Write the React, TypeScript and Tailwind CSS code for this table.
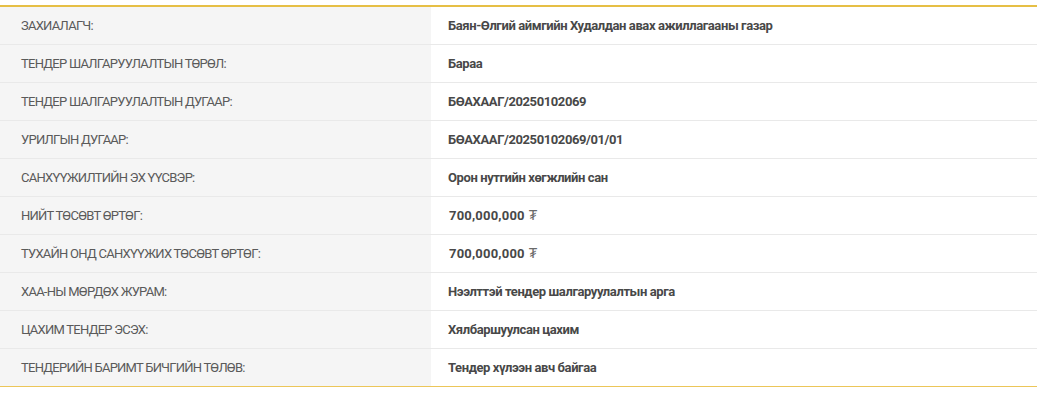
import React from 'react';

const rows: [string, string][] = [
  ['ЗАХИАЛАГЧ:', 'Баян-Өлгий аймгийн Худалдан авах ажиллагааны газар'],
  ['ТЕНДЕР ШАЛГАРУУЛАЛТЫН ТӨРӨЛ:', 'Бараа'],
  ['ТЕНДЕР ШАЛГАРУУЛАЛТЫН ДУГААР:', 'БӨАХААГ/20250102069'],
  ['УРИЛГЫН ДУГААР:', 'БӨАХААГ/20250102069/01/01'],
  ['САНХҮҮЖИЛТИЙН ЭХ ҮҮСВЭР:', 'Орон нутгийн хөгжлийн сан'],
  ['НИЙТ ТӨСӨВТ ӨРТӨГ:', '700,000,000'],
  ['ТУХАЙН ОНД САНХҮҮЖИХ ТӨСӨВТ ӨРТӨГ:', '700,000,000'],
  ['ХАА-НЫ МӨРДӨХ ЖУРАМ:', 'Нээлттэй тендер шалгаруулалтын арга'],
  ['ЦАХИМ ТЕНДЕР ЭСЭХ:', 'Хялбаршуулсан цахим'],
  ['ТЕНДЕРИЙН БАРИМТ БИЧГИЙН ТӨЛӨВ:', 'Тендер хүлээн авч байгаа'],
];

const App: React.FC = () => {
  return (
    <div className="w-[1037px] h-[398px] bg-white pt-[5px] font-['Roboto',sans-serif]">
      <div className="border-t-2 border-[#e6bf45]">
        {rows.map(([label, value], i) => {
          const last = i === rows.length - 1;
          const money = value.startsWith('700');
          return (
            <div
              key={label}
              className={`grid grid-cols-[431px_1fr] h-[38px] border-b ${last ? 'border-[#ecc659]' : 'border-[#e9e9e9]'}`}
            >
              <div className="bg-[#f5f5f5] flex items-center pl-[21px] text-[13px] text-[#5a5a5a] tracking-[-0.75px]">
                {label}
              </div>
              {money ? (
                <div className="flex items-center pl-[18px] text-[13px] font-bold text-[#484848] tracking-[0.2px]">
                  {value}
                  <span className="ml-[4px] text-[14px] font-normal text-[#6a6a6a]">₮</span>
                </div>
              ) : (
                <div className="flex items-center pl-[17px] text-[13px] font-bold text-[#484848] tracking-[-0.4px]">
                  {value}
                </div>
              )}
            </div>
          );
        })}
      </div>
    </div>
  );
};

export default App;
